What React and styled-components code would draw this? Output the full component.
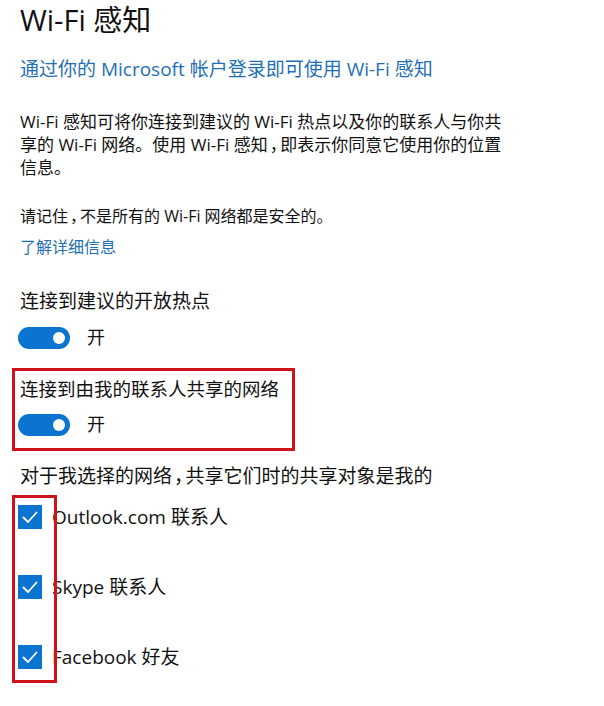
import React from 'react';
import styled, { createGlobalStyle } from 'styled-components';

const GlobalStyle = createGlobalStyle`
  html, body {
    margin: 0;
    padding: 0;
    background: #ffffff;
  }
  body {
    font-family: 'Segoe UI', 'Open Sans', 'Noto Sans CJK SC', sans-serif;
    color: #111;
  }
`;

const Page = styled.div`
  width: 604px;
  height: 706px;
  padding-left: 20px;
  box-sizing: border-box;
  overflow: hidden;
  display: flex;
  flex-direction: column;
  align-items: flex-start;
`;

const Title = styled.h1`
  margin: 0;
  font-size: 29px;
  line-height: 40px;
  font-weight: 400;
  color: #111;
  white-space: nowrap;
`;

const Text = styled.p`
  margin: ${p => p.$top || 0}px 0 0 0;
  font-size: ${p => p.$size || 17}px;
  line-height: 23px;
  color: ${p => (p.$link ? '#1f6fb5' : '#111')};
  white-space: nowrap;
`;

// narrow full-width comma, as the screenshot renders it
const Comma = styled.span`
  font-feature-settings: 'halt';
  margin: 0 2px;
`;

const ToggleRow = styled.div`
  display: flex;
  align-items: center;
  gap: 17px;
  margin-top: ${p => p.$top || 0}px;
  font-size: 18px;
  line-height: 23px;
  margin-left: -2px;
`;

const Switch = styled.span`
  width: 52px;
  height: 22px;
  border-radius: 11px;
  background: #0a74d0;
  display: flex;
  align-items: center;
  justify-content: flex-end;
  padding-right: 5px;
  box-sizing: border-box;
`;

const Knob = styled.span`
  width: 12px;
  height: 12px;
  border-radius: 50%;
  background: #fff;
`;

const Highlight = styled.div`
  margin: 19px 0 0 -8px;
  width: 283px;
  box-sizing: border-box;
  border: 3px solid #d0121b;
  padding: 6px 5px 12px 5px;
`;

const CheckList = styled.div`
  position: relative;
  margin-top: 17px;
  display: flex;
  flex-direction: column;
  gap: 46px;
`;

const CheckRow = styled.label`
  display: flex;
  align-items: center;
  gap: 10px;
  margin-left: -2px;
  font-size: 19px;
  line-height: 24px;
  color: #111;
`;

const Box = styled.span`
  width: 24px;
  height: 24px;
  background: #0a74d0;
  display: flex;
  align-items: center;
  justify-content: center;
`;

const CheckMarker = styled.div`
  position: absolute;
  left: -8px;
  top: -10px;
  width: 45px;
  height: 188px;
  box-sizing: border-box;
  border: 3px solid #d0121b;
  pointer-events: none;
`;

const Toggle = ({ label, top }) => (
  <ToggleRow $top={top}>
    <Switch><Knob /></Switch>
    <span>{label}</span>
  </ToggleRow>
);

const Check = ({ children }) => (
  <CheckRow>
    <Box>
      <svg width="18" height="18" viewBox="0 0 18 18" fill="none">
        <path d="M2.5 9.5 L7 14 L15.5 4.5" stroke="#fff" strokeWidth="1.8" strokeLinecap="round" strokeLinejoin="round" />
      </svg>
    </Box>
    <span>{children}</span>
  </CheckRow>
);

export default function App() {
  return (
    <Page>
      <GlobalStyle />
      <Title>Wi-Fi 感知</Title>
      <Text $link $size={19} $top={18}>通过你的 Microsoft 帐户登录即可使用 Wi-Fi 感知</Text>
      <Text $top={29}>
        Wi-Fi 感知可将你连接到建议的 Wi-Fi 热点以及你的联系人与你共<br />
        享的 Wi-Fi 网络。使用 Wi-Fi 感知<Comma>，</Comma>即表示你同意它使用你的位置<br />
        信息。
      </Text>
      <Text $size={16} $top={26}>请记住<Comma>，</Comma>不是所有的 Wi-Fi 网络都是安全的。</Text>
      <Text $link $size={16} $top={8}>了解详细信息</Text>
      <Text $size={19} $top={31}>连接到建议的开放热点</Text>
      <Toggle label="开" top={13} />
      <Highlight>
        <Text $size={18.5}>连接到由我的联系人共享的网络</Text>
        <Toggle label="开" top={13} />
      </Highlight>
      <Text $size={19} $top={14}>对于我选择的网络<Comma>，</Comma>共享它们时的共享对象是我的</Text>
      <CheckList>
        <Check>Outlook.com 联系人</Check>
        <Check>Skype 联系人</Check>
        <Check>Facebook 好友</Check>
        <CheckMarker />
      </CheckList>
    </Page>
  );
}
